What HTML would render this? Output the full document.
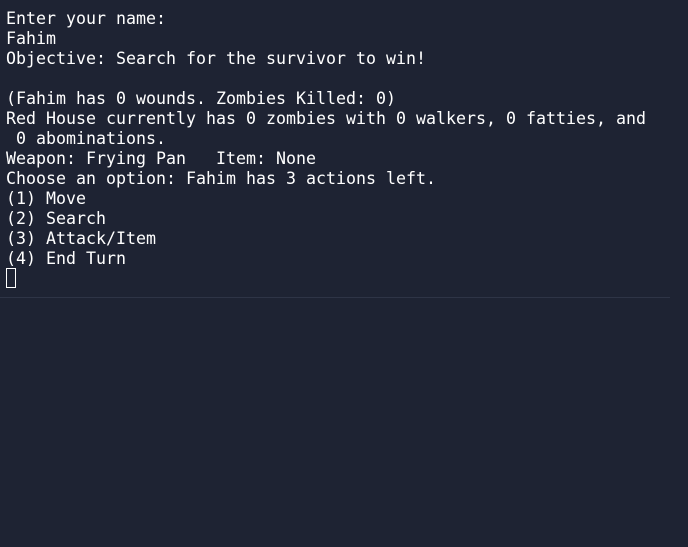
<!DOCTYPE html>
<html><head><style>
html,body{margin:0;padding:0;background:#1e2333;width:688px;height:547px;overflow:hidden}
pre{margin:0;position:absolute;left:6px;top:9px;font-family:"DejaVu Sans Mono","Liberation Mono",monospace;font-size:16.63px;line-height:20px;color:#fff}
.cur{position:absolute;left:6px;top:268px;width:8px;height:18px;border:1px solid #fff}
.hr{position:absolute;left:0;top:297px;width:670px;height:1px;background:#2e3446}
</style></head><body>
<pre>Enter your name:
Fahim
Objective: Search for the survivor to win!

(Fahim has 0 wounds. Zombies Killed: 0)
Red House currently has 0 zombies with 0 walkers, 0 fatties, and
 0 abominations.
Weapon: Frying Pan   Item: None
Choose an option: Fahim has 3 actions left.
(1) Move
(2) Search
(3) Attack/Item
(4) End Turn</pre>
<div class="cur"></div>
<div class="hr"></div>
</body></html>
